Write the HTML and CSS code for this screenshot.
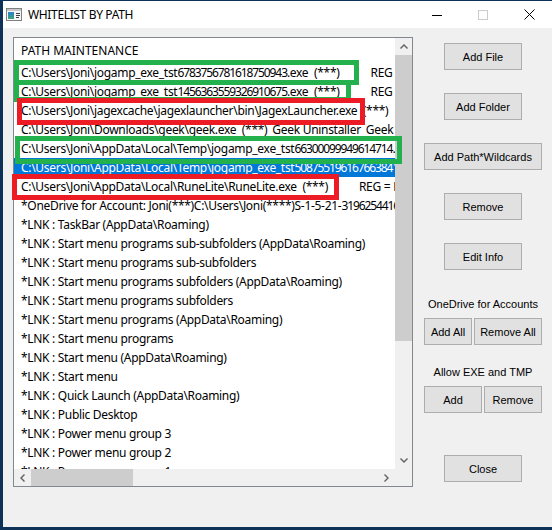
FILE: index.html
```html
<!DOCTYPE html>
<html lang="en">
<head>
    <meta charset="UTF-8">
    <meta name="viewport" content="width=device-width, initial-scale=1.0">
    <title>Whitelist By Path</title>
    <link rel="stylesheet" href="styles.css">
</head>
<body>

    <div class="window">
        <div class="titlebar">
            <svg class="app-icon" width="16" height="13" viewBox="0 0 16 13">
                <rect x="0.5" y="0.5" width="15" height="12" fill="#f6f6f6" stroke="#808080"/>
                <rect x="1" y="1" width="14" height="2" fill="#c8c8c8"/>
                <defs>
                    <linearGradient id="pane" x1="0" y1="0" x2="0" y2="1">
                        <stop offset="0" stop-color="#2a7fd4"/>
                        <stop offset="1" stop-color="#3aa572"/>
                    </linearGradient>
                </defs>
                <rect x="2" y="4" width="6" height="7" fill="url(#pane)"/>
                <rect x="10" y="5" width="4" height="1" fill="#404040"/>
                <rect x="10" y="7" width="4" height="1" fill="#404040"/>
                <rect x="10" y="9" width="3" height="1" fill="#404040"/>
            </svg>
            <span class="title">WHITELIST BY PATH</span>
            <div class="caption-buttons">
                <span class="caption">
                    <svg width="10" height="10" viewBox="0 0 10 10"><path d="M0 5.5H10" stroke="#000" stroke-width="1"/></svg>
                </span>
                <span class="caption">
                    <svg width="10" height="10" viewBox="0 0 10 10"><rect x="0.5" y="0.5" width="9" height="9" fill="none" stroke="#cccccc"/></svg>
                </span>
                <span class="caption">
                    <svg width="11" height="11" viewBox="0 0 11 11"><path d="M0.5 0.5L10.5 10.5M10.5 0.5L0.5 10.5" stroke="#000" stroke-width="1"/></svg>
                </span>
            </div>
        </div>

        <div class="client">
            <div class="listbox">
                <div class="list-area">
                    <div class="list-items">
                        <div class="list-header">PATH MAINTENANCE</div>
                        <div class="item">C:\Users\Joni\jogamp_exe_tst<span class="num">6783756781618750943</span>.exe  (***)<span class="col-wide">REG = HKCU</span></div>
                        <div class="item">C:\Users\Joni\jogamp_exe_tst<span class="num">1456363559326910675</span>.exe  (***)<span class="col-wide">REG = HKCU</span></div>
                        <div class="item">C:\Users\Joni\jagexcache\jagexlauncher\bin\JagexLauncher.exe  (***)<span class="col-wide">REG = HKCU</span></div>
                        <div class="item">C:\Users\Joni\Downloads\geek\geek.exe  (***)<span class="col-narrow">Geek Uninstaller</span><span class="col-narrow">Geek</span></div>
                        <div class="item">C:\Users\Joni\AppData\Local\Temp\jogamp_exe_tst<span class="num">66300099949614714</span>.exe  (***)</div>
                        <div class="item selected">C:\Users\Joni\AppData\Local\Temp\jogamp_exe_tst<span class="num">5087551961676638412</span>.exe  (***)</div>
                        <div class="item">C:\Users\Joni\AppData\Local\RuneLite\RuneLite.exe  (***)<span class="col-wide">REG = HKCU</span></div>
                        <div class="item">*OneDrive for Account: Joni(***)C:\Users\Joni(****)S-1-5-21-<span class="num">3196254416</span>-1234</div>
                        <div class="item">*LNK : TaskBar (AppData\Roaming)</div>
                        <div class="item">*LNK : Start menu programs sub-subfolders (AppData\Roaming)</div>
                        <div class="item">*LNK : Start menu programs sub-subfolders</div>
                        <div class="item">*LNK : Start menu programs subfolders (AppData\Roaming)</div>
                        <div class="item">*LNK : Start menu programs subfolders</div>
                        <div class="item">*LNK : Start menu programs (AppData\Roaming)</div>
                        <div class="item">*LNK : Start menu programs</div>
                        <div class="item">*LNK : Start menu (AppData\Roaming)</div>
                        <div class="item">*LNK : Start menu</div>
                        <div class="item">*LNK : Quick Launch (AppData\Roaming)</div>
                        <div class="item">*LNK : Public Desktop</div>
                        <div class="item">*LNK : Power menu group 3</div>
                        <div class="item">*LNK : Power menu group 2</div>
                        <div class="item">*LNK : Power menu group 1</div>
                    </div>
                    <div class="vscroll">
                        <span class="arrow">
                            <svg width="8" height="5" viewBox="0 0 8 5"><path d="M0.5 4.5L4 1L7.5 4.5" fill="none" stroke="#606060" stroke-width="1.4"/></svg>
                        </span>
                        <span class="vthumb"></span>
                        <span class="track"></span>
                        <span class="arrow">
                            <svg width="8" height="5" viewBox="0 0 8 5"><path d="M0.5 0.5L4 4L7.5 0.5" fill="none" stroke="#606060" stroke-width="1.4"/></svg>
                        </span>
                    </div>
                </div>
                <div class="hscroll">
                    <span class="arrow">
                        <svg width="5" height="8" viewBox="0 0 5 8"><path d="M4.5 0.5L1 4L4.5 7.5" fill="none" stroke="#606060" stroke-width="1.4"/></svg>
                    </span>
                    <span class="hthumb"></span>
                    <span class="track"></span>
                    <span class="arrow">
                        <svg width="5" height="8" viewBox="0 0 5 8"><path d="M0.5 0.5L4 4L0.5 7.5" fill="none" stroke="#606060" stroke-width="1.4"/></svg>
                    </span>
                    <span class="corner"></span>
                </div>
            </div>

            <div class="panel">
                <button class="btn">Add File</button>
                <button class="btn gap">Add Folder</button>
                <button class="btn gap wide">Add Path*Wildcards</button>
                <button class="btn gap">Remove</button>
                <button class="btn gap">Edit Info</button>

                <div class="group-label first">OneDrive for Accounts</div>
                <div class="btn-pair">
                    <button class="btn add-all">Add All</button>
                    <button class="btn remove-all">Remove All</button>
                </div>

                <div class="group-label second">Allow EXE and TMP</div>
                <div class="btn-pair">
                    <button class="btn half">Add</button>
                    <button class="btn half">Remove</button>
                </div>

                <button class="btn close">Close</button>
            </div>
        </div>

        <!-- highlight boxes drawn over the list -->
        <div class="mark green mark-a"></div>
        <div class="mark green mark-b"></div>
        <div class="mark red mark-c"></div>
        <div class="mark green mark-d"></div>
        <div class="mark red mark-e"></div>
    </div>

</body>
</html>
```

FILE: styles.css
```css
body {
    margin: 0;
    padding: 0;
    background-color: #0d3157;
    font-family: "Noto Sans", "Liberation Sans", sans-serif;
    overflow: hidden;
}
.window {
    position: relative;
    margin: 1px 0 0 3px;
    width: 549px;
    height: 526px;
    background-color: #f0f0f0;
    display: flex;
    flex-direction: column;
}

/* title bar */
.titlebar {
    height: 27px;
    flex-shrink: 0;
    background-color: #ffffff;
    display: flex;
    align-items: center;
}
.app-icon {
    margin-left: 3px;
}
.title {
    margin-left: 6px;
    font-size: 12px;
    letter-spacing: -0.35px;
    color: #000000;
}
.caption-buttons {
    margin-left: auto;
    display: flex;
    height: 100%;
}
.caption {
    width: 46px;
    display: flex;
    align-items: center;
    justify-content: center;
}

/* client area */
.client {
    display: flex;
    padding: 9px 0 0 10px;
}
.listbox {
    width: 400px;
    height: 450px;
    box-sizing: border-box;
    border: 1px solid #828790;
    background-color: #ffffff;
    display: flex;
    flex-direction: column;
}
.list-area {
    display: flex;
    height: 431px;
}
.list-items {
    width: 381px;
    overflow: hidden;
    font-size: 12px;
    color: #000000;
}
.list-header {
    height: 25px;
    line-height: 25px;
    padding-left: 7px;
}
.item {
    height: 19px;
    line-height: 19px;
    padding-left: 7px;
    white-space: pre;
    letter-spacing: -0.3px;
}
.item .num {
    letter-spacing: -1.1px;
}
.item.selected {
    background-color: #0078d7;
    color: #ffffff;
}
.col-wide {
    margin-left: 31px;
}
.col-narrow {
    margin-left: 5px;
}

/* scroll bars */
.vscroll {
    width: 17px;
    display: flex;
    flex-direction: column;
    background-color: #f0f0f0;
}
.arrow {
    width: 17px;
    height: 17px;
    flex-shrink: 0;
    display: flex;
    align-items: center;
    justify-content: center;
}
.track {
    flex: 1;
}
.vthumb {
    height: 286px;
    background-color: #cdcdcd;
}
.hscroll {
    height: 17px;
    display: flex;
    background-color: #f0f0f0;
}
.hthumb {
    width: 102px;
    background-color: #cdcdcd;
}
.corner {
    width: 17px;
    background-color: #f0f0f0;
}

/* buttons on the right */
.panel {
    width: 118px;
    margin-left: 11px;
    padding-top: 6px;
    display: flex;
    flex-direction: column;
    align-items: center;
    font-family: "Liberation Sans", Arial, sans-serif;
    font-size: 11px;
}
.btn {
    width: 78px;
    height: 27px;
    padding: 0;
    font-family: "Liberation Sans", Arial, sans-serif;
    font-size: 11px;
    color: #000000;
    background-color: #e1e1e1;
    border: 1px solid #adadad;
}
.btn.gap {
    margin-top: 23px;
}
.btn.wide {
    width: 118px;
}
.group-label {
    height: 15px;
    line-height: 15px;
    color: #000000;
}
.group-label.first {
    margin-top: 27px;
}
.group-label.second {
    margin-top: 20px;
}
.btn-pair {
    display: flex;
    gap: 2px;
    margin-top: 6px;
}
.btn.add-all {
    width: 48px;
}
.btn.remove-all {
    width: 68px;
}
.btn.half {
    width: 58px;
}
.btn.close {
    margin-top: 42px;
}

/* paint-style highlight boxes */
.mark {
    position: absolute;
    box-sizing: border-box;
    border: 5px solid;
}
.green {
    border-color: #22b14c;
}
.red {
    border-color: #ed1c24;
}
.mark-a {
    left: 11px;
    top: 59px;
    width: 345px;
    height: 25px;
}
.mark-b {
    left: 11px;
    top: 79px;
    width: 337px;
    height: 22px;
}
.mark-c {
    left: 14px;
    top: 97px;
    width: 348px;
    height: 27px;
}
.mark-d {
    left: 12px;
    top: 135px;
    width: 387px;
    height: 28px;
}
.mark-e {
    left: 9px;
    top: 173px;
    width: 327px;
    height: 26px;
}
```
